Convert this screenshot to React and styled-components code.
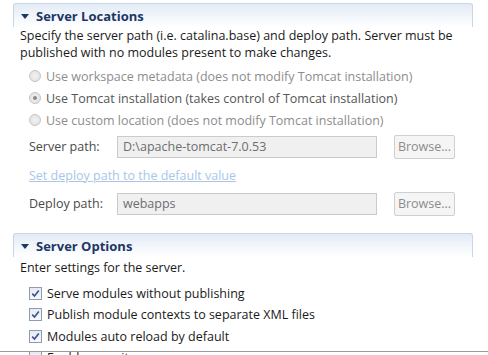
import React from "react";
import styled, { createGlobalStyle } from "styled-components";

const Global = createGlobalStyle`
  html, body { margin: 0; padding: 0; background: #fff; }
  body {
    font-family: "Open Sans", "Noto Sans", sans-serif;
    font-size: 12.5px;
    color: #1a1a1a;
    width: 488px;
    height: 355px;
    overflow: hidden;
  }
`;

const Page = styled.div`
  padding: 3px 15px 0 13px;
  display: flex;
  flex-direction: column;
`;

const Section = styled.section`
  display: flex;
  flex-direction: column;
  margin-top: ${(p) => p.$top || 0}px;
`;

const Header = styled.div`
  height: 23px;
  display: flex;
  align-items: center;
  gap: 7px;
  padding-left: 7px;
  border: 1px solid #c9d6e6;
  border-bottom: none;
  border-radius: 3px 3px 0 0;
  background: linear-gradient(#e3ebf6, #f4f7fc 60%, #ffffff);
  font-weight: 700;
  font-size: 13px;
  color: #1c3764;
`;

const Triangle = styled.span`
  width: 0;
  height: 0;
  border-left: 4px solid transparent;
  border-right: 4px solid transparent;
  border-top: 5px solid #1c3764;
  margin-top: 1px;
`;

const Body = styled.div`
  display: flex;
  flex-direction: column;
  padding-left: 7px;
`;

const Desc = styled.p`
  margin: ${(p) => p.$top ?? 1}px 0 0;
  line-height: 16.5px;
`;

const Options = styled.div`
  display: flex;
  flex-direction: column;
  padding-left: 9px;
  margin-top: ${(p) => p.$top || 0}px;
`;

const Row = styled.div`
  height: ${(p) => p.$h || 22}px;
  display: flex;
  align-items: center;
  gap: 5px;
  white-space: nowrap;
  color: ${(p) => (p.$disabled ? "#8d8d8d" : "#1a1a1a")};
`;

const RowText = styled.span`
  color: ${(p) => p.$color || "inherit"};
`;

const Radio = styled.span`
  width: 10px;
  height: 10px;
  border-radius: 50%;
  border: 1px solid #c4c4c4;
  background: radial-gradient(circle, #f2f2f2, #dedede);
  display: flex;
  align-items: center;
  justify-content: center;
  &::after {
    content: "";
    width: 4px;
    height: 4px;
    border-radius: 50%;
    background: #8a8a8a;
    display: ${(p) => (p.$checked ? "block" : "none")};
  }
`;

const Check = styled.span`
  width: 11px;
  height: 11px;
  border: 1px solid #8f9bb0;
  background: linear-gradient(#e6ebf3, #f8f9fc);
  display: flex;
  align-items: center;
  justify-content: center;
`;

const FieldRow = styled.div`
  display: grid;
  grid-template-columns: 71px 260px 61px;
  align-items: center;
  column-gap: 17px;
  height: 27px;
`;

const Label = styled.span`
  color: #4a4a4a;
  white-space: nowrap;
`;

const Input = styled.div`
  height: 20px;
  border: 1px solid #cbcbcb;
  background: #f0f0f0;
  color: #6e6e6e;
  display: flex;
  align-items: center;
  padding-left: 5px;
`;

const Button = styled.div`
  height: 22px;
  border: 1px solid #cfcfcf;
  border-radius: 2px;
  background: #f5f5f5;
  color: #8c8c8c;
  display: flex;
  align-items: center;
  justify-content: center;
`;

const Link = styled.span`
  height: 30px;
  display: flex;
  align-items: center;
  color: #a9c6e6;
  text-decoration: underline;
`;

const BottomLine = styled.div`
  position: fixed;
  left: 0;
  right: 0;
  bottom: 3px;
  height: 1px;
  background: #9a9a9a;
`;

const CheckMark = () => (
  <svg width="9" height="9" viewBox="0 0 9 9">
    <path d="M1.2 4.6 L3.5 7 L7.8 1.6" fill="none" stroke="#3d4f8f" strokeWidth="1.6" />
  </svg>
);

export default function App() {
  return (
    <>
      <Global />
      <Page>
        <Section>
          <Header>
            <Triangle />
            Server Locations
          </Header>
          <Body>
            <Desc>
              Specify the server path (i.e. catalina.base) and deploy path. Server must be
              <br />
              published with no modules present to make changes.
            </Desc>
            <Options $top={4}>
              <Row $disabled>
                <Radio />
                Use workspace metadata (does not modify Tomcat installation)
              </Row>
              <Row $disabled>
                <Radio $checked />
                <RowText $color="#555">Use Tomcat installation (takes control of Tomcat installation)</RowText>
              </Row>
              <Row $disabled>
                <Radio />
                Use custom location (does not modify Tomcat installation)
              </Row>
            </Options>
            <Options $top={2}>
              <FieldRow>
                <Label>Server path:</Label>
                <Input>D:\apache-tomcat-7.0.53</Input>
                <Button>Browse...</Button>
              </FieldRow>
              <Link>Set deploy path to the default value</Link>
              <FieldRow>
                <Label>Deploy path:</Label>
                <Input>webapps</Input>
                <Button>Browse...</Button>
              </FieldRow>
            </Options>
          </Body>
        </Section>
        <Section $top={16}>
          <Header>
            <Triangle />
            Server Options
          </Header>
          <Body>
            <Desc $top={3}>Enter settings for the server.</Desc>
            <Options $top={6}>
              <Row $h={21.5}>
                <Check><CheckMark /></Check>
                Serve modules without publishing
              </Row>
              <Row $h={21.5}>
                <Check><CheckMark /></Check>
                Publish module contexts to separate XML files
              </Row>
              <Row $h={21.5}>
                <Check><CheckMark /></Check>
                Modules auto reload by default
              </Row>
              <Row $h={21.5}>
                <Check />
                Enable security
              </Row>
            </Options>
          </Body>
        </Section>
      </Page>
      <BottomLine />
    </>
  );
}
